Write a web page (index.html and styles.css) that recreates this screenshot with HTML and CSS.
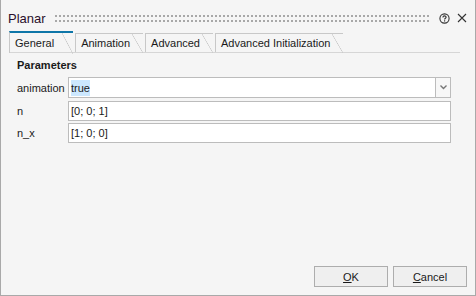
FILE: index.html
```html
<!DOCTYPE html>
<html lang="en">
<head>
    <meta charset="UTF-8">
    <title>Planar</title>
    <link rel="stylesheet" href="styles.css">
</head>
<body>
    <div class="dialog">
        <div class="titlebar">
            <span class="title">Planar</span>
            <div class="grip"></div>
            <svg class="help" width="11" height="11" viewBox="0 0 11 11">
                <circle cx="5.5" cy="5.5" r="4.6" fill="none" stroke="#333" stroke-width="1.1"/>
                <path d="M3.9 4.4 C3.9 3.4 4.6 2.9 5.5 2.9 C6.4 2.9 7.1 3.4 7.1 4.3 C7.1 5.3 5.6 5.3 5.6 6.5" fill="none" stroke="#333" stroke-width="1.1"/>
                <rect x="5" y="7.3" width="1.2" height="1.2" fill="#333"/>
            </svg>
            <svg class="close" width="10" height="10" viewBox="0 0 10 10">
                <path d="M1 1 L9 9 M9 1 L1 9" stroke="#333" stroke-width="1.1"/>
            </svg>
        </div>

        <div class="tabs">
            <div class="tab active">General</div>
            <div class="tab">Animation</div>
            <div class="tab">Advanced</div>
            <div class="tab">Advanced Initialization</div>
        </div>

        <div class="page">
            <div class="group-title">Parameters</div>
            <div class="row">
                <label>animation</label>
                <div class="field combo">
                    <span class="value"><span class="selected">true</span></span>
                    <span class="drop">
                        <svg width="7" height="5" viewBox="0 0 7 5"><path d="M0.5 0.5 L3.5 3.5 L6.5 0.5" fill="none" stroke="#777" stroke-width="1.4"/></svg>
                    </span>
                </div>
            </div>
            <div class="row">
                <label>n</label>
                <div class="field"><span class="value">[0; 0; 1]</span></div>
            </div>
            <div class="row">
                <label>n_x</label>
                <div class="field"><span class="value">[1; 0; 0]</span></div>
            </div>
        </div>

        <div class="buttons">
            <button><u>O</u>K</button>
            <button><u>C</u>ancel</button>
        </div>
    </div>
</body>
</html>
```

FILE: styles.css
```css
html, body {
    margin: 0;
    padding: 0;
}

body {
    font-family: 'Liberation Sans', Arial, sans-serif;
    font-size: 11px;
    color: #1a1a1a;
    background-color: #f5f5f5;
}

.dialog {
    width: 476px;
    height: 296px;
    box-sizing: border-box;
    border: 1px solid #a9a9a9;
    border-top: none;
    background-color: #f5f5f5;
    display: flex;
    flex-direction: column;
}

.titlebar {
    display: flex;
    align-items: center;
    height: 36px;
    padding: 0 8px 0 7px;
}

.title {
    font-size: 13px;
    color: #2b0f2b;
    margin-right: 9px;
}

.grip {
    flex: 1;
    height: 7px;
    background-image:
        linear-gradient(90deg, #a8a8a8 2px, transparent 2px),
        linear-gradient(90deg, #a8a8a8 2px, transparent 2px);
    background-size: 4px 2px, 4px 2px;
    background-position: 0 0, 0 5px;
    background-repeat: repeat-x;
    margin-right: 8px;
}

.help {
    margin-right: 7px;
}

.tabs {
    display: flex;
    align-items: flex-end;
    height: 21px;
    margin: -5px 15px 0 8px;
    border-bottom: 1px solid #d6d6d6;
}

.tab {
    position: relative;
    height: 18px;
    line-height: 18px;
    padding: 0 13px 0 5px;
    margin-right: 2px;
    border-left: 1px solid #c8c8c8;
    border-top: 1px solid #c8c8c8;
    color: #1a1a1a;
}

.tab::after {
    content: '';
    position: absolute;
    right: 0;
    top: 0;
    width: 11px;
    height: 19px;
    background: linear-gradient(to top right, transparent calc(50% - 0.6px), #c8c8c8, transparent calc(50% + 0.6px));
}

.tab.active {
    height: 20px;
    line-height: 20px;
    padding-right: 19px;
    border-top: 2px solid #0e76a8;
    margin-bottom: -1px;
}

.tab.active::after {
    height: 21px;
}

.page {
    flex: 1;
    padding: 6px 24px 0 16px;
}

.group-title {
    font-weight: bold;
    height: 16px;
}

.row {
    display: flex;
    align-items: center;
    margin-top: 2px;
}

.row label {
    width: 51px;
}

.field {
    flex: 1;
    height: 18px;
    border: 1px solid #bcbcbc;
    background-color: #fff;
    display: flex;
    align-items: center;
}

.field.combo {
    height: 19px;
    margin-bottom: 1px;
}

.value {
    flex: 1;
    padding-left: 2px;
}

.selected {
    background-color: #cce8ff;
    padding: 2px 0;
}

.drop {
    width: 14px;
    height: 100%;
    border-left: 1px solid #bcbcbc;
    display: flex;
    align-items: center;
    justify-content: center;
    background-color: #f7f7f7;
}

.buttons {
    display: flex;
    justify-content: flex-end;
    gap: 5px;
    padding: 0 8px 8px 0;
}

.buttons button {
    width: 74px;
    height: 21px;
    font-family: 'Liberation Sans', Arial, sans-serif;
    font-size: 11px;
    color: #1a1a1a;
    background-color: #efefef;
    border: 1px solid #adadad;
    border-radius: 0;
    padding: 0;
}
```
